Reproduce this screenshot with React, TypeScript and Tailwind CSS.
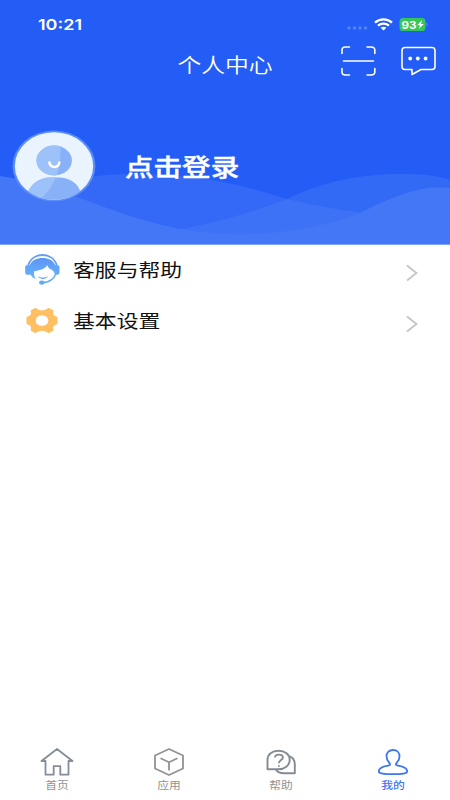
import type { ReactNode } from 'react';

function StatusBar() {
  return (
    <div className="flex h-12 items-center pl-[38px] pr-[22px] text-white">
      <span className="origin-left scale-x-[1.2] text-[15px] leading-none font-semibold font-['Inter',sans-serif]">10:21</span>
      <div className="ml-auto flex items-center">
        <svg className="mt-[8px] mr-[6px]" width="21" height="4" viewBox="0 0 21 4" fill="#5784f8">
          <circle cx="2" cy="2" r="1.7" />
          <circle cx="7.5" cy="2" r="1.7" />
          <circle cx="13" cy="2" r="1.7" />
          <circle cx="18.5" cy="2" r="1.7" />
        </svg>
        <svg className="mr-[6px]" width="19" height="13" viewBox="0 0 19 13" fill="none" stroke="#fff">
          <path d="M1 4.6C5.7.3 13.3.3 18 4.6" strokeWidth="2.3" />
          <path d="M4 7.6c3.2-2.7 7.8-2.7 11 0" strokeWidth="2.2" />
          <path d="M6.6 9.8c1.8-1.4 4-1.4 5.8 0L9.5 12.5Z" fill="#fff" stroke="none" />
        </svg>
        <svg width="29" height="13" viewBox="0 0 29 13">
          <rect x=".5" width="26" height="13" rx="3.6" fill="#35c759" />
          <path d="M27.3 4.5c1.8.4 1.8 3.6 0 4Z" fill="#5784f8" />
          <text x="2.6" y="10.5" fill="#fff" fontSize="10.5" fontWeight="700" fontFamily="Inter, sans-serif" textLength="15" lengthAdjust="spacingAndGlyphs">93</text>
          <path d="M23 2.2 18.2 7.2h2.8l-1.2 3.9 5-5.2h-2.8Z" fill="#fff" />
        </svg>
      </div>
    </div>
  );
}

function Waves() {
  return (
    <svg className="absolute bottom-0 left-0" width="450" height="75" viewBox="0 170 450 75">
      <path d="M0 200C50 182 95 174 130 174C198 174 240 184 287 199C325 208 355 212 390 216L450 220V245H0Z" fill="#3369f6" />
      <path d="M110 238C190 232 245 215 287 199C325 181 360 174 403 174C425 174 438 176 450 180V245H110Z" fill="#4f82f8" fillOpacity=".36" />
      <path d="M0 176C64 185 105 214 180 229C240 240 310 233 360 213C390 198 421 184 450 188V245H0Z" fill="#4377f6" />
      <path d="M0 244.5H450" stroke="#7fa4fa" />
    </svg>
  );
}

function Avatar() {
  return (
    <svg width="84" height="72" viewBox="0 0 84 72">
      <defs>
        <clipPath id="face"><ellipse cx="42" cy="36" rx="39.2" ry="33.7" /></clipPath>
        <clipPath id="person">
          <ellipse cx="42.2" cy="30.5" rx="17.7" ry="15" />
          <path d="M15.5 65C17 54 28 47.5 38 47.5h9C58 47.5 68 54 69 65V72H15Z" />
        </clipPath>
      </defs>
      <ellipse cx="42" cy="36" rx="41.5" ry="35.5" fill="#5b8cf8" />
      <ellipse cx="42" cy="36" rx="39.2" ry="33.7" fill="#eaf4ff" />
      <g clipPath="url(#face)">
        <g clipPath="url(#person)">
          <path d="M0 0H84V72H0Z" fill="#88b1f8" />
          <path d="M0 0H46C52 26 48 55 25 72H0Z" fill="#9dc2fa" />
        </g>
      </g>
      <path d="M37.4 32.4c.8 6 9.2 6 10 0" fill="none" stroke="#fff" strokeWidth="2.5" strokeLinecap="round" />
    </svg>
  );
}

function SupportIcon() {
  return (
    <svg width="36" height="32" viewBox="0 0 36 32">
      <defs>
        <linearGradient id="support" x1="0" y1="0" x2="0" y2="1">
          <stop stopColor="#5c96f5" /><stop offset="1" stopColor="#66b4fc" />
        </linearGradient>
      </defs>
      <path d="M4.2 11.5C7.5-2.5 29.5-2.5 32.8 11.5" fill="none" stroke="#629cf7" strokeWidth="1.8" />
      <path d="M2.5 11.2H5.8C9 1.6 28 1.6 31.2 11.2h3Q35.5 11.4 35.5 13.2v5.3Q35.5 20.7 33.5 20.7H31C30.2 17.4 28.6 16 26.6 15.2C24.8 14.4 23.9 13 23.5 11.3C20.5 15 15 16.8 10.2 17.2C9.6 19.8 10 22.4 12 25C9.4 23.9 7.6 22.6 6.7 20.7H3Q1.2 20.7 1.2 18.5v-5.3Q1.2 11.4 2.5 11.2Z" fill="url(#support)" />
      <path d="M13.8 22.2c3 1.8 7.2 1.8 10.2 0c-2 3.6-8 3.6-10.2 0Z" fill="#65a7f9" />
      <path d="M31.8 20C29.6 25.5 25 28 19.5 28.6" fill="none" stroke="#67aef9" strokeWidth="1.6" />
      <ellipse cx="17.8" cy="28.6" rx="2.7" ry="2.1" fill="#62aaf8" />
    </svg>
  );
}

function GearIcon() {
  return (
    <svg width="36" height="27" viewBox="0 0 36 27">
      <path fill="#ffbf62" stroke="#ffbf62" strokeWidth="2" strokeLinejoin="round" fillRule="evenodd" d="M11.5 2 14.3 3.6Q18 4.9 21.7 3.6L24.5 2 28.3 4 27.8 7.2Q28.8 9.8 32.5 10.8V16.2Q28.8 17.2 27.8 19.8L28.3 23 24.5 25 21.7 23.4Q18 22.1 14.3 23.4L11.5 25 7.7 23 8.2 19.8Q7.2 17.2 3.5 16.2V10.8Q7.2 9.8 8.2 7.2L7.7 4ZM18 7.3C13.7 7.3 10.7 10 10.7 13.5S13.7 19.7 18 19.7S25.3 17 25.3 13.5S22.3 7.3 18 7.3Z" />
    </svg>
  );
}

function MenuRow({ icon, label }: { icon: ReactNode; label: string }) {
  return (
    <button className="flex h-[51px] w-full items-center pr-[32.5px] pb-0.5 pl-6 text-left">
      <span className="flex w-[48.5px]">{icon}</span>
      <span className="origin-left scale-x-[1.18] text-[18.5px] leading-none whitespace-nowrap text-[#111]">{label}</span>
      <svg className="mt-[6px] ml-auto" width="12" height="18" viewBox="0 0 12 18" fill="none" stroke="#c7c7c9" strokeWidth="2">
        <path d="M1 1.5 10.5 9 1 16.5" />
      </svg>
    </button>
  );
}

function Tab({ icon, label, active = false }: { icon: ReactNode; label: string; active?: boolean }) {
  return (
    <button className={`flex w-28 flex-col items-center gap-[3px] ${active ? 'text-[#3e76f6]' : 'text-[#929292]'}`}>
      {icon}
      <span className={`mr-px scale-x-[1.18] text-[10px] leading-[12px] ${active ? 'font-medium' : ''}`}>{label}</span>
    </button>
  );
}

export default function App() {
  return (
    <main className="flex h-[800px] w-[450px] flex-col overflow-hidden bg-white font-['Noto_Sans_CJK_SC',sans-serif]">
      <header className="relative h-[245px] shrink-0 bg-[#235df5]">
        <Waves />
        <div className="relative">
          <StatusBar />
          <div className="flex h-[34px] items-center justify-end pr-[14px] text-white">
            <h1 className="mr-[75px] scale-x-[1.19] text-[20px] leading-none font-[350] whitespace-nowrap">个人中心</h1>
            <svg className="mb-[8px] mr-[25px]" width="36" height="30" viewBox="0 0 36 30" fill="none" stroke="#fff" strokeWidth="1.6" strokeLinecap="round">
              <path d="M2 7.5V4Q2 1 5.5 1H9.5M27 1h4q3.8 0 3.8 3V7.5M2 22.5V26Q2 29 5.5 29H9.5M27 29h4q3.8 0 3.8-3V22.5M3.5 15H33.5" />
            </svg>
            <svg className="mb-[8px]" width="35" height="30" viewBox="0 0 35 30">
              <path d="M4 1.5H31Q34 1.5 34 4.5V20.5Q34 23.5 31 23.5H20L11 28.5V23.5H4Q1 23.5 1 20.5V4.5Q1 1.5 4 1.5Z" fill="none" stroke="#fff" strokeWidth="1.6" strokeLinejoin="round" />
              <g fill="#fff"><circle cx="9.2" cy="12.5" r="1.9" /><circle cx="16.8" cy="12.5" r="1.9" /><circle cx="24.6" cy="12.5" r="1.9" /></g>
            </svg>
          </div>
          <div className="mt-12 flex h-[72px] items-center pl-3">
            <Avatar />
            <span className="ml-[29px] origin-left scale-x-[1.19] text-[24px] leading-none font-medium whitespace-nowrap text-white [-webkit-text-stroke:0.4px_white]">点击登录</span>
          </div>
        </div>
      </header>
      <section>
        <MenuRow icon={<SupportIcon />} label="客服与帮助" />
        <MenuRow icon={<GearIcon />} label="基本设置" />
      </section>
      <nav className="mt-auto flex h-[52px] items-start pl-px">
        <Tab label="首页" icon={
          <svg width="34" height="28" viewBox="0 0 34 28" fill="none" stroke="#858d99" strokeWidth="1.8" strokeLinejoin="round">
            <path d="M17 1 1.5 13H5.5V26.7H13.7V18.2H20.3V26.7H28.5V13H32.5Z" />
          </svg>
        } />
        <Tab label="应用" icon={
          <svg width="34" height="28" viewBox="0 0 34 28" fill="none" stroke="#929292" strokeWidth="1.8" strokeLinejoin="round">
            <path d="M17 1 31 7.5V20.5L17 27 3 20.5V7.5ZM8.5 10.3 17 14.2 25.5 10.3M17 14.2V22.5" />
          </svg>
        } />
        <Tab label="帮助" icon={
          <svg width="34" height="28" viewBox="0 0 34 28" fill="none" stroke="#858b92" strokeWidth="1.9" strokeLinejoin="round">
            <path d="M3.5 21.3V12C3.5 6.2 8 2.8 14.5 2.8S25.7 6.5 25.7 12S20.5 21.3 14.5 21.3Z" />
            <path d="M25 8.2C29 9.4 30.8 12.5 30.8 16.5V25.2H20C16 25.2 13.3 24 12 21.8" />
            <path d="M11 9.5C11 5.6 18.9 5.6 18.9 9.5C18.9 12 14.9 12.2 14.9 15.3" />
            <circle cx="14.9" cy="18" r=".6" fill="#858b92" strokeWidth=".9" />
          </svg>
        } />
        <Tab active label="我的" icon={
          <svg width="34" height="28" viewBox="0 0 34 28" fill="none" stroke="#3e76f6" strokeWidth="1.8" strokeLinejoin="round">
            <path d="M17 2C12.8 2 10.5 4.8 10.5 8.3C10.5 11 11.6 13 13.1 14.6C14.9 16.5 14.2 17.3 12 17.7C6.5 18.7 2.8 20.8 2.8 23.2C2.8 25.8 8 26.2 17 26.2S31.2 25.8 31.2 23.2C31.2 20.8 27.5 18.7 22 17.7C19.8 17.3 19.1 16.5 20.9 14.6C22.4 13 23.5 11 23.5 8.3C23.5 4.8 21.2 2 17 2Z" />
          </svg>
        } />
      </nav>
    </main>
  );
}
